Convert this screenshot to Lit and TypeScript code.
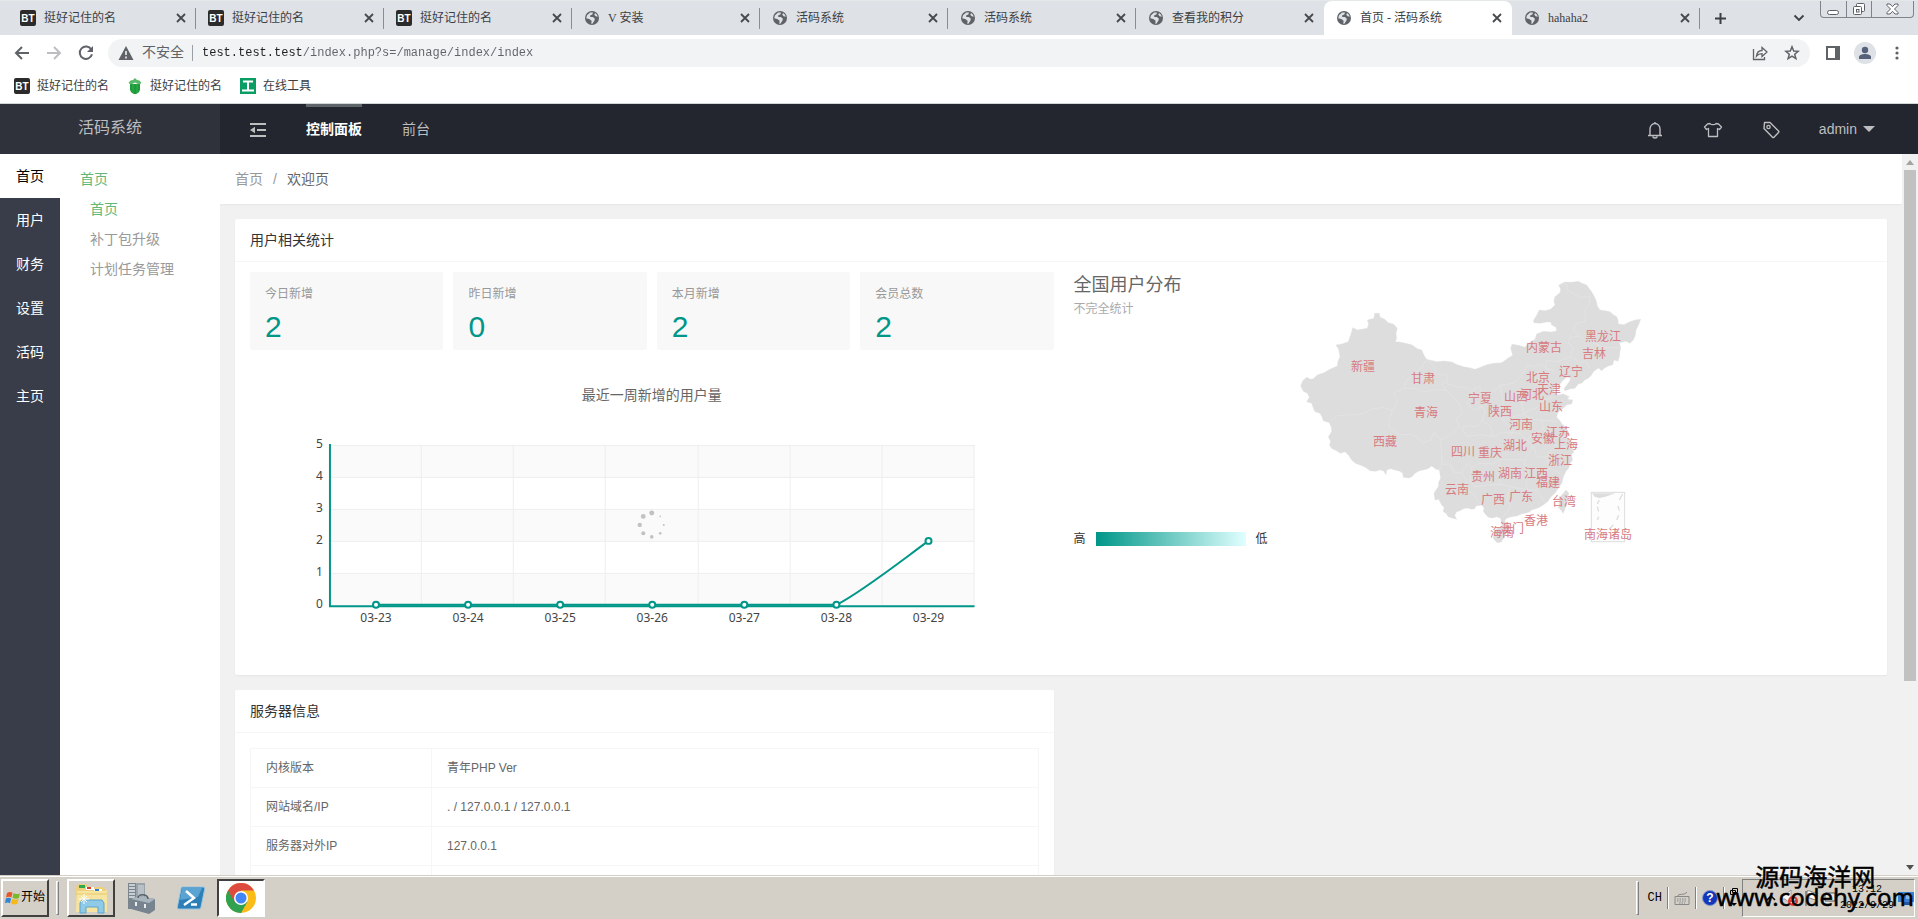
import { LitElement, html, svg, css } from "lit";
import { customElement } from "lit/decorators.js";
import { classMap } from "lit/directives/class-map.js";

type Fav = "bt" | "globe";

const TABS: { title: string; icon: Fav; active?: boolean }[] = [
  { title: "挺好记住的名", icon: "bt" },
  { title: "挺好记住的名", icon: "bt" },
  { title: "挺好记住的名", icon: "bt" },
  { title: "V 安装", icon: "globe" },
  { title: "活码系统", icon: "globe" },
  { title: "活码系统", icon: "globe" },
  { title: "查看我的积分", icon: "globe" },
  { title: "首页 - 活码系统", icon: "globe", active: true },
  { title: "hahaha2", icon: "globe" },
];

const PRIMARY = ["首页", "用户", "财务", "设置", "活码", "主页"];

const STATS = [
  { label: "今日新增", value: 2 },
  { label: "昨日新增", value: 0 },
  { label: "本月新增", value: 2 },
  { label: "会员总数", value: 2 },
];

const WEEK = [
  { day: "03-23", n: 0 },
  { day: "03-24", n: 0 },
  { day: "03-25", n: 0 },
  { day: "03-26", n: 0 },
  { day: "03-27", n: 0 },
  { day: "03-28", n: 0 },
  { day: "03-29", n: 2 },
];

const SERVER = [
  ["内核版本", "青年PHP Ver"],
  ["网站域名/IP", ". / 127.0.0.1 / 127.0.0.1"],
  ["服务器对外IP", "127.0.0.1"],
  ["", ""],
];

/* Province labels, centre points in map units (three units to a pixel). */
const PROVINCES: [string, number, number][] = [
  ["新疆", 250, 320], ["甘肃", 430, 356], ["青海", 439, 460], ["西藏", 314, 545],
  ["宁夏", 600, 418], ["陕西", 660, 457], ["山西", 708, 412], ["河北", 757, 404],
  ["北京", 775, 355], ["天津", 806, 389], ["内蒙古", 793, 263], ["黑龙江", 969, 230],
  ["吉林", 942, 281], ["辽宁", 872, 335], ["山东", 812, 440], ["河南", 724, 496],
  ["江苏", 834, 518], ["安徽", 788, 536], ["上海", 858, 554], ["湖北", 704, 557],
  ["浙江", 841, 602], ["四川", 549, 577], ["重庆", 629, 578], ["湖南", 691, 641],
  ["江西", 767, 641], ["福建", 804, 670], ["贵州", 610, 650], ["云南", 531, 689],
  ["广西", 638, 721], ["广东", 724, 711], ["台湾", 851, 725], ["香港", 767, 782],
  ["澳门", 697, 808], ["海南", 665, 820], ["南海诸岛", 983, 824],
];

const MAINLAND =
  "M62 378L68 362L80 352L92 358L100 356L112 345L132 338L150 328L172 318L174 304L180 290L176 268L168 255L186 252L205 245L208 236L212 225L218 203L232 210L245 208L262 205L266 192L262 180L282 175L284 160L298 160L300 172L314 178L325 188L340 192L352 205L348 220L350 235L346 246L358 246L376 250L395 254L412 266L425 270L432 286L440 298L470 305L492 303L515 306L532 314L550 320L568 323L585 328L602 322L620 314L642 310L665 308L682 296L698 286L692 265L696 253L716 256L735 262L745 250L765 238L770 222L790 214L812 216L830 213L828 202L815 195L812 186L800 186L782 190L762 188L760 182L770 166L778 150L795 152L812 148L825 135L822 124L824 112L832 104L840 98L842 88L836 76L846 70L855 66L876 67L895 64L906 70L920 75L928 86L935 95L942 108L948 120L952 138L960 150L976 152L990 155L1000 164L1010 170L1014 180L1015 192L1032 194L1050 185L1066 180L1082 178L1076 194L1068 210L1066 226L1060 240L1050 250L1038 244L1018 248L1022 262L1020 275L1018 290L1014 304L1002 300L998 314L985 318L974 324L965 332L955 324L940 335L934 346L925 355L914 360L905 370L895 372L885 385L872 386L855 392L852 386L858 378L868 365L872 354L860 352L848 362L840 372L828 378L820 385L822 398L835 405L850 402L868 410L862 418L878 420L875 432L860 434L850 445L840 450L832 462L830 472L838 480L846 492L855 500L868 520L862 530L846 528L862 536L875 545L872 556L882 575L874 584L878 600L870 610L866 625L858 634L850 650L846 668L835 685L826 698L812 712L804 724L790 735L774 744L755 750L748 756L735 760L724 762L710 768L694 770L680 775L674 782L680 795L668 800L664 790L662 775L650 770L638 774L625 772L618 764L610 755L612 744L605 735L588 738L584 746L575 748L562 744L550 746L540 752L530 755L524 766L530 778L516 774L505 770L498 760L490 755L492 742L485 735L476 718L465 720L462 700L468 690L475 680L476 666L482 655L478 630L468 628L455 618L444 626L430 630L418 632L405 640L396 650L386 654L370 652L368 640L360 634L345 630L332 626L320 630L318 644L310 632L300 630L286 634L270 632L256 622L240 615L226 610L215 600L206 586L195 575L182 580L165 570L156 566L148 555L152 544L145 530L155 515L154 502L148 488L130 482L126 470L120 460L105 455L100 444L95 430L80 425L88 412L82 400L70 394Z";

const BORDERS = [
  "M150 488L170 468L210 464L250 462L270 448L310 442L338 452",
  "M338 452L352 420L340 400L372 384L380 360L400 345L425 322L440 298",
  "M338 452L326 480L330 505L360 524L400 524L430 548L452 540L462 518L482 540L486 612L478 630",
  "M372 384L408 386L430 396L470 388L500 392L520 412L538 430L548 455L530 480L538 500L516 524L482 540",
  "M440 298L462 318L470 342L500 346L502 362L485 372L500 392",
  "M500 370L530 380L560 384L578 402L560 430L580 450L606 440L616 456L606 482L590 500L566 496L545 505",
  "M578 402L586 384L600 380L604 398L620 404L640 396L660 376L700 370L720 352L735 330L742 314L762 320L785 310L798 325L822 332",
  "M606 482L630 496L640 530L600 524L560 530L545 505",
  "M660 376L668 420L672 440L668 480L700 512L690 530",
  "M640 530L668 516L720 520L742 540L760 560L734 600L736 640L742 690",
  "M668 480L700 470L730 462L750 450L776 440L790 420L822 412",
  "M730 392L724 420L730 462L756 478L784 480L830 484",
  "M784 480L790 508L812 530L826 556L872 562",
  "M742 540L760 520L790 508M760 560L770 590L800 592L826 556",
  "M734 600L660 598L656 640L660 672L690 680L742 690L770 690L790 650L808 624L800 592",
  "M656 598L640 612L600 610L576 622L560 612L545 640L520 636L510 612L486 612",
  "M576 622L570 660L584 680L620 676L660 672M545 640L560 660L556 690L580 700L590 720L610 738",
  "M690 680L680 720L692 740L668 772M808 624L840 640L850 650M770 690L790 720L796 730",
  "M836 76L860 70L862 90L900 112L930 110L928 130L915 150L916 185L888 190L880 210L898 230",
  "M898 230L870 232L865 250L880 262L872 290L890 300L900 310L915 300L930 325",
  "M898 230L920 236L945 250L970 262L1000 262L1018 262",
  "M798 325L800 300L830 306L872 290M742 360L760 340L784 350L788 368L812 374",
];

const globe = svg`<circle cx="8" cy="8" r="7" fill="#5f6368"/><path d="M3 5.200 6.200 2.600 9 2.400 8.300 4.600 6.300 5.300 6.200 7 8.800 7 10.800 8.600 10.500 10.500 8.400 13.800 7.300 13.700 7.600 10.800 5.200 9 2.200 8.200zM11 3l2 1.800.7 2-2-.6-1.400-1.400z" fill="#dee1e6"/>`;
const bt = svg`<rect width="16" height="16" rx="2" fill="#2b2b2b"/><text x="8" y="12" text-anchor="middle" font-family="Liberation Sans, sans-serif" font-size="10" font-weight="700" fill="#fff">BT</text>`;
const ico = (w: number, h: number, body: unknown) =>
  html`<svg width=${w} height=${h} viewBox="0 0 ${w} ${h}" aria-hidden="true">${body}</svg>`;

@customElement("browser-chrome")
export class BrowserChrome extends LitElement {
  static styles = css`
    :host { display: block; font: 12px/16px "Liberation Serif", "Noto Sans CJK SC", serif; color: #3c4043; }
    svg { display: block; flex: none; }
    button { border: 0; padding: 0; background: none; font: inherit; color: inherit; display: flex; align-items: center; }
    .strip { display: flex; height: 35px; padding-left: 8px; background: #dee1e6; border-top: 1px solid #e4e8e8; box-sizing: border-box; align-items: stretch; }
    .tab { flex: 0 1 188px; display: flex; align-items: center; padding: 0 10px 0 12px; box-sizing: border-box; position: relative; }
    .tab:not(.on):not(.before)::after { content: ""; position: absolute; right: 0; top: 7px; bottom: 6px; width: 1px; background: #8a8d92; }
    .tab.on { background: #fff; border-radius: 8px 8px 0 0; }
    .name { flex: 1; gap: 8px; text-align: left; min-width: 0; white-space: nowrap; }
    .plus { margin: 0 auto 0 14px; }
    .chev { margin-right: 15px; }
    .wins { display: flex; height: 17px; margin-right: 4px; border: 1px solid #80848a; border-top: 0; border-radius: 0 0 4px 4px; box-sizing: border-box; }
    .wins button { width: 25px; justify-content: center; }
    .wins button + button { border-left: 1px solid #80848a; }
    .wins button:last-child { width: 42px; }
    .bar { display: flex; align-items: center; height: 36px; background: #fff; padding: 0 14px; gap: 16px; }
    .omni { flex: 1; display: flex; align-items: center; height: 28px; border-radius: 14px; background: #f1f3f4; margin-left: -2px; padding: 0 10px; font-size: 14px; color: #5f6368; }
    .omni span { margin-left: 8px; padding-right: 8px; border-right: 1px solid #9aa0a6; line-height: 16px; }
    .url { flex: 1; min-width: 0; border: 0; outline: 0; padding: 0; margin-left: 9px; font: 12px/16px "Liberation Mono", monospace; color: transparent;
      background: linear-gradient(90deg, #202124 14ch, #5f6368 14ch); -webkit-background-clip: text; background-clip: text; }
    .acts { display: flex; gap: 16px; }
    .tools { display: flex; align-items: center; gap: 14px; }
    .marks { display: flex; align-items: center; height: 32px; padding: 0 14px 2px; box-sizing: border-box; background: #fff; gap: 18px; }
    .edge { height: 1px; background: #cfd8d4; }
    .marks a { display: flex; gap: 7px; align-items: center; color: #3c4043; text-decoration: none; }
  `;
  render() {
    return html`
      <div class="strip" role="tablist">
        ${TABS.map((t, i) => html`
          <div class=${classMap({ tab: true, on: !!t.active, before: !!TABS[i + 1]?.active })}>
            <button class="name" role="tab" aria-selected=${t.active ? "true" : "false"}>${ico(16, 16, t.icon === "bt" ? bt : globe)}${t.title}</button>
            <button aria-label="关闭">${ico(10, 10, svg`<path d="M1 1l8 8M9 1L1 9" stroke="#45494d" stroke-width="1.800"/>`)}</button>
          </div>`)}
        <button class="plus" aria-label="新标签">${ico(13, 13, svg`<path d="M6.500 1v11M1 6.500h11" stroke="#3c4043" stroke-width="2"/>`)}</button>
        <button class="chev" aria-label="搜索标签">${ico(12, 8, svg`<path d="M1.500 1.500L6 6l4.500-4.500" stroke="#3c4043" stroke-width="1.800" fill="none"/>`)}</button>
        <div class="wins">
          <button aria-label="最小化">${ico(13, 15, svg`<rect x=".5" y="8.500" width="11" height="4" rx="2" fill="#fff" stroke="#5c6066"/>`)}</button>
          <button aria-label="还原">${ico(14, 14, svg`<rect x="4.500" y="1.500" width="8" height="8" rx="1" fill="#fff" stroke="#5c6066"/><rect x="1.500" y="4.500" width="8" height="8" rx="1" fill="#fff" stroke="#5c6066"/><rect x="4.500" y="7.500" width="2.500" height="2.500" fill="none" stroke="#5c6066"/>`)}</button>
          <button aria-label="关闭窗口">${ico(13, 12, svg`<path d="M1 1h3l2.500 2.700L9 1h3v1.500L8.500 6l3.500 3.500V11H9L6.500 8.300 4 11H1V9.500L4.500 6 1 2.500z" fill="#fff" stroke="#5c6066"/>`)}</button>
        </div>
      </div>
      <div class="bar">
        <button aria-label="后退">${ico(16, 16, svg`<path d="M15 8H2M8 2L2 8l6 6" stroke="#5f6368" stroke-width="2" fill="none"/>`)}</button>
        <button aria-label="前进">${ico(16, 16, svg`<path d="M1 8h13M8 2l6 6-6 6" stroke="#bcbec1" stroke-width="2" fill="none"/>`)}</button>
        <button aria-label="刷新">${ico(16, 16, svg`<path d="M13.300 4.500A6.200 6.200 0 1 0 14 9.300" stroke="#5f6368" stroke-width="2" fill="none"/><path d="M15 1v6H9z" fill="#5f6368"/>`)}</button>
        <div class="omni">
          ${ico(16, 14, svg`<path d="M8 0l7.500 14H.5z" fill="#5f6368"/><path d="M8 5v4M8 10.500v2" stroke="#f1f3f4" stroke-width="1.600"/>`)}
          <span>不安全</span>
          <input class="url" aria-label="地址" value="test.test.test/index.php?s=/manage/index/index" />
          <div class="acts">
            <button aria-label="分享">${ico(16, 16, svg`<path d="M1.500 4v10.500h11V12" stroke="#5f6368" stroke-width="1.300" fill="none"/><path d="M4.500 11C5 7 7.500 5.500 10 5.500V2.500l5 4.500-5 4.500V8.600C8 8.600 6 9 4.500 11z" stroke="#5f6368" stroke-width="1.300" fill="none"/>`)}</button>
            <button aria-label="收藏">${ico(16, 16, svg`<path d="M8 1.800l1.700 4.200 4.500.3-3.500 2.900 1.200 4.400L8 11.200l-3.900 2.400 1.200-4.400L1.800 6.300 6.300 6z" stroke="#5f6368" stroke-width="1.500" fill="none"/>`)}</button>
          </div>
        </div>
        <div class="tools">
          <button aria-label="侧边栏">${ico(14, 14, svg`<path d="M1 1h12v12H1z" stroke="#5f6368" stroke-width="2" fill="none"/><path d="M9 1h4v12H9z" fill="#5f6368"/>`)}</button>
          <button aria-label="用户">${ico(22, 22, svg`<circle cx="11" cy="11" r="11" fill="#dee1e6"/><circle cx="11" cy="8" r="3.200" fill="#56627a"/><path d="M5 17v-2c0-4 12-4 12 0v2z" fill="#56627a"/>`)}</button>
          <button aria-label="菜单">${ico(14, 14, svg`<circle cx="7" cy="2" r="1.600" fill="#5f6368"/><circle cx="7" cy="7" r="1.600" fill="#5f6368"/><circle cx="7" cy="12" r="1.600" fill="#5f6368"/>`)}</button>
        </div>
      </div>
      <nav class="marks">
        <a href="#">${ico(16, 16, bt)}挺好记住的名</a>
        <a href="#">${ico(16, 16, svg`<path d="M3 6h10v5c0 3-3 5-5 5s-5-2-5-5z" fill="#1f9a3a"/><path d="M1.500 5l2-2.500L6 2l2-2 2 2 2.500.5 2 2.500-2.500 1.500L8 4.500 4 6.500z" fill="#58b96b"/><path d="M6 6v9M10 6v9" stroke="#2fb04c"/>`)}挺好记住的名</a>
        <a href="#">${ico(16, 16, svg`<rect width="16" height="16" fill="#0a9d63"/><path d="M3 3.500h10M8 3.500v9M2 12.500h12" stroke="#fff" stroke-width="2"/>`)}在线工具</a>
      </nav>
      <div class="edge"></div>`;
  }
}

@customElement("week-chart")
export class WeekChart extends LitElement {
  static styles = css`
    :host { display: block; }
    svg { display: block; width: 100%; height: auto; }
    .title { font: 14px "Liberation Sans", "Noto Sans CJK SC", sans-serif; fill: #666; }
    .tick { font: 12px "Noto Sans", sans-serif; fill: #444; }
    .spin { fill: #c2c2c2; }
  `;
  render() {
    const L = 80, T = 95, W = 645, H = 160, base = T + H;
    const step = W / WEEK.length;
    const px = (i: number) => L + step * (i + 0.5);
    const py = (n: number) => base - (n * H) / 5;
    const dots = [2.5, 0.8, 1, 1.3, 1.8, 2, 2.2, 2.4];
    return html`<svg viewBox="0 0 804 315" role="img" aria-label="最近一周新增的用户量">
      <text class="title" x="402" y="50" text-anchor="middle">最近一周新增的用户量</text>
      ${[0, 2, 4].map((r) => svg`<rect x=${L} y=${T + r * 32} width=${W} height="32" fill="#fafafa"/>`)}
      ${[0, 1, 2, 3, 4].map((r) => svg`<path d="M${L} ${T + r * 32 + 0.5}h${W}" stroke="#eee"/>`)}
      ${WEEK.map((_, i) => svg`<path d="M${Math.round(L + step * (i + 1)) - 0.5} ${T}v${H}" stroke="#eee"/>`)}
      ${[0, 1, 2, 3, 4, 5].map((n) => svg`<text class="tick" x="73" y=${py(n) + 3} text-anchor="end">${n}</text>`)}
      ${WEEK.map((d, i) => svg`<text class="tick" x=${px(i)} y="272" text-anchor="middle">${d.day}</text>`)}
      ${dots.map((r, i) => svg`<circle class="spin" cx=${402 + 12 * Math.sin((i * Math.PI) / 4)} cy=${175 - 12 * Math.cos((i * Math.PI) / 4)} r=${r}/>`)}
      <path d="M80 94v163M79 256.500h646" stroke="#009688" stroke-width="2"/>
      <path d="M${px(0)} ${base}H${px(5)}C${px(5) + 24} ${base - 12} ${px(6) - 30} ${py(2) + 22} ${px(6)} ${py(2)}" fill="none" stroke="#009688" stroke-width="2"/>
      ${WEEK.map((d, i) => svg`<circle cx=${px(i)} cy=${py(d.n)} r="3" fill="#fff" stroke="#009688" stroke-width="2"/>`)}
    </svg>`;
  }
}

@customElement("user-map")
export class UserMap extends LitElement {
  static styles = css`
    :host { display: flex; font: 12px/16px "Liberation Sans", "Noto Sans CJK SC", sans-serif; }
    .side { flex: 0 0 206px; display: flex; flex-direction: column; padding-bottom: 3px; box-sizing: border-box; }
    h3 { margin: 0 0 3px; font-size: 18px; font-weight: 400; line-height: 26px; color: #666; }
    p { margin: 0; color: #aaa; }
    .scale { display: flex; align-items: center; gap: 10px; margin-top: auto; color: #333; }
    .ramp { width: 150px; height: 14px; background: linear-gradient(90deg, #009688, #e0ffff); }
    svg { display: block; flex: none; }
    .land { fill: #ddd; stroke: #ddd; }
    .line { fill: none; stroke: #e6e6e6; stroke-width: 2; }
    .name { font: 12px "Liberation Sans", "Noto Sans CJK SC", sans-serif; fill: #d87a80; text-anchor: middle; }
  `;
  render() {
    return html`
      <div class="side">
        <h3>全国用户分布</h3>
        <p>不完全统计</p>
        <div class="scale"><span>高</span><div class="ramp"></div><span>低</span></div>
      </div>
      <svg width="380" height="278" viewBox="0 12 380 278" role="img" aria-label="全国用户分布">
        <g transform="scale(.33333)">
          <path class="land" d=${MAINLAND}/>
          <path class="land" d="M642 812L655 804L672 800L682 808L676 826L664 846L652 848L640 836Z"/>
          <path class="land" d="M858 690L866 698L862 728L850 760L836 742L840 712Z"/>
          ${BORDERS.map((d) => svg`<path class="line" d=${d}/>`)}
          <rect x="934" y="697" width="100" height="148" fill="#fdfdfd" stroke="#ddd" stroke-width="3"/>
          <path d="M936 700h70l-30 10-18 4-14-4z" fill="#ddd"/>
          <path d="M1028 702l-10 18M958 720l-6 12M952 740l4 14M956 770l-4 10M1014 738l4 14M1016 766l-6 14M1000 794l-10 12" stroke="#ddd" stroke-width="4"/>
        </g>
        ${PROVINCES.map(([n, x, y]) => svg`<text class="name" x=${Math.round(x / 3)} y=${Math.round(y / 3) + 4}>${n}</text>`)}
      </svg>`;
  }
}

@customElement("admin-page")
export class AdminPage extends LitElement {
  static styles = css`
    :host { display: flex; flex-direction: column; min-height: 0; overflow: hidden; font: 14px/20px "Liberation Sans", "Noto Sans CJK SC", sans-serif; color: #666; }
    a { color: inherit; text-decoration: none; }
    svg { display: block; flex: none; }
    .top { flex: none; display: flex; height: 50px; background: #23262e; color: #bdbec0; }
    .logo { width: 220px; background: #2f323b; display: flex; align-items: center; justify-content: center; font-size: 16px; padding-bottom: 2px; box-sizing: border-box; }
    .menu { flex: 1; display: flex; align-items: stretch; padding: 0 43px 0 30px; }
    .menu a, .user { display: flex; align-items: center; padding-bottom: 1px; box-sizing: border-box; }
    .fold { border: 0; background: none; padding: 2px 0 0; margin-right: 40px; }
    .menu .on { color: #fff; font-weight: 700; border-top: 3px solid #5f6669; padding-bottom: 4px; margin-right: 40px; }
    .icons { display: flex; gap: 38px; align-items: center; margin: 2px 38px 0 auto; }
    .icons button, .user { border: 0; background: none; padding-left: 0; padding-right: 0; color: inherit; font: inherit; }
    .user { gap: 6px; padding-top: 0; }
    .main { flex: 1; min-height: 0; display: flex; }
    .first { flex: 0 0 60px; background: #393d49; color: #fff; }
    .first a { display: block; line-height: 44px; text-align: center; }
    .first .on { background: #fff; color: #000; }
    .second { flex: 0 0 160px; background: #fff; color: #999; padding: 10px 20px; box-sizing: border-box; }
    .second a { display: block; line-height: 30px; }
    .second .sub { padding-left: 10px; }
    .second .on { color: #5fb878; }
    .view { flex: 1; min-width: 0; overflow: hidden; background: #f1f1f1; }
    .crumb { height: 50px; background: #fff; box-shadow: 0 1px 2px rgba(0, 0, 0, 0.05); padding-left: 15px; display: flex; align-items: center; gap: 10px; color: #999; }
    .crumb b { font-weight: 400; color: #666; }
    .body { padding: 15px; display: grid; grid-template-columns: 1fr 1fr; gap: 15px; }
    .card { background: #fff; border-radius: 2px; box-shadow: 0 1px 2px rgba(0, 0, 0, 0.05); }
    .card.wide { grid-column: 1 / -1; }
    .card h2 { margin: 0; font-size: 14px; font-weight: 400; line-height: 42px; padding: 0 15px; color: #333; border-bottom: 1px solid #f6f6f6; }
    .cols { display: grid; grid-template-columns: 1fr 1fr; gap: 15px; padding: 10px 15px; align-items: start; }
    .stats { display: grid; grid-template-columns: repeat(4, 1fr); gap: 10px; }
    .stat { background: #f8f8f8; border-radius: 2px; padding: 12px 15px 0; color: #999; font-size: 12px; line-height: 20px; }
    .stat strong { display: block; font-size: 30px; font-weight: 400; line-height: 46px; color: #009688; }
    user-map { padding-left: 5px; }
    .info { padding: 15px; }
    table { width: 100%; border-collapse: collapse; font-size: 12px; table-layout: fixed; }
    th, td { border: 1px solid #f6f6f6; font-weight: 400; text-align: left; padding: 9px 15px; height: 20px; }
    th { width: 150px; }
    .rail { flex: 0 0 16px; background: #f1f1f1; display: flex; flex-direction: column; align-items: center; padding: 6px 0 5px; box-sizing: border-box; }
    .thumb { width: 12px; height: 72%; margin: 5px 0 auto; background: #c1c1c1; }
  `;
  render() {
    return html`
      <header class="top">
        <a class="logo" href="#">活码系统</a>
        <div class="menu">
          <button class="fold" aria-label="收起">${ico(16, 16, svg`<path d="M0 2h16M7 8h9M0 14h16" stroke="#bdbec0" stroke-width="2"/><path d="M0 8l5-3.200v6.400z" fill="#bdbec0"/>`)}</button>
          <a class="on" href="#">控制面板</a>
          <a href="#">前台</a>
          <div class="icons">
            <button aria-label="消息">${ico(20, 20, svg`<path d="M3 15.500h14M5 15.500V9a5 5.500 0 0 1 10 0v6.500M8 16.500a2 1.500 0 0 0 4 0M10 3.500V2" stroke="#bdbec0" stroke-width="1.400" fill="none"/>`)}</button>
            <button aria-label="主题">${ico(20, 20, svg`<path d="M7 3.500c1 1.600 5 1.600 6 0l2.500.5L18.500 7l-2 2.500-2-1v8h-9v-8l-2 1-2-2.500L4.500 4z" stroke="#bdbec0" stroke-width="1.300" fill="none" stroke-linejoin="round"/>`)}</button>
            <button aria-label="便签">${ico(20, 20, svg`<path d="M3.500 2.500L9 2.500 17.500 11c.5.500.5 1 0 1.500L13 17.200c-.5.500-1 .5-1.500 0L3 8.500z" stroke="#bdbec0" stroke-width="1.400" fill="none" stroke-linejoin="round"/><circle cx="7.500" cy="7" r="1.700" stroke="#bdbec0" stroke-width="1.300" fill="none"/>`)}</button>
          </div>
          <button class="user">admin ${ico(12, 6, svg`<path d="M0 0h12L6 6z" fill="#bdbec0"/>`)}</button>
        </div>
      </header>
      <div class="main">
        <nav class="first">${PRIMARY.map((n, i) => html`<a href="#" class=${classMap({ on: i === 0 })}>${n}</a>`)}</nav>
        <nav class="second">
          <a class="on" href="#">首页</a>
          <a class="sub on" href="#">首页</a>
          <a class="sub" href="#">补丁包升级</a>
          <a class="sub" href="#">计划任务管理</a>
        </nav>
        <div class="view">
          <div class="crumb"><a href="#">首页</a><span>/</span><b>欢迎页</b></div>
          <div class="body">
            <section class="card wide">
              <h2>用户相关统计</h2>
              <div class="cols">
                <div>
                  <div class="stats">${STATS.map((s) => html`<div class="stat">${s.label}<strong>${s.value}</strong></div>`)}</div>
                  <week-chart></week-chart>
                </div>
                <user-map></user-map>
              </div>
            </section>
            <section class="card">
              <h2>服务器信息</h2>
              <div class="info">
                <table><tbody>${SERVER.map(([k, v]) => html`<tr><th scope="row">${k}</th><td>${v}</td></tr>`)}</tbody></table>
              </div>
            </section>
          </div>
        </div>
        <div class="rail">
          ${ico(8, 5, svg`<path d="M0 5l4-5 4 5z" fill="#a3a3a3"/>`)}
          <div class="thumb"></div>
          ${ico(8, 5, svg`<path d="M0 0l4 5 4-5z" fill="#505050"/>`)}
        </div>
      </div>`;
  }
}

@customElement("task-bar")
export class TaskBar extends LitElement {
  static styles = css`
    :host { display: flex; align-items: center; height: 44px; box-sizing: border-box; background: #d4d0c8; border-top: 1px solid #d4d0c8; box-shadow: inset 0 1px #fff; padding: 1px 3px 1px 1px; position: relative; font: 12px/16px "Liberation Mono", "Noto Sans CJK SC", monospace; color: #000; }
    svg { display: block; flex: none; }
    button { border: 0; background: none; padding: 0; font: inherit; color: inherit; display: flex; align-items: center; justify-content: center; height: 38px; width: 48px; }
    .raised { border: 2px solid; border-color: #fff #404040 #404040 #fff; box-sizing: border-box; }
    .sunk { border: 2px solid; border-color: #404040 #fff #fff #404040; background: #fff; box-sizing: border-box; }
    .grip { width: 3px; height: 34px; border: 1px solid; border-color: #fff #808080 #808080 #fff; box-sizing: border-box; }
    .apps { display: flex; gap: 2px; margin: 0 auto 0 8px; }
    .start { margin-right: 7px; }
    .lang { display: flex; align-items: center; gap: 5px; padding: 0 4px 0 9px; }
    .sep { width: 1px; height: 22px; background: #808080; border-right: 1px solid #fff; }
    .tray { display: flex; align-items: center; justify-content: flex-end; gap: 4px; width: 173px; height: 38px; border: 1px solid; border-color: #808080 #fff #fff #808080; box-sizing: border-box; }
    .clock { text-align: center; font-size: 10px; }
    .mark { position: absolute; right: 4px; bottom: 12px; text-align: center; font: 24px/20px "Noto Sans", "Noto Sans CJK SC", sans-serif; -webkit-text-stroke: 0.5px #000; pointer-events: none; }
  `;
  render() {
    return html`
      <button class="raised start">${ico(16, 16, svg`<path d="M2 3c2-1.500 4-1.200 5.500-.2L6.300 7.500C4.800 6.500 3 6.500 1 7.500z" fill="#e8562a"/><path d="M8.500 3.200c2 1 4 1.200 6.500 0L13.800 8c-2 1-4 .8-6.300-.3z" fill="#7ab929"/><path d="M.8 8.500c2-1 3.500-1 5.300 0L5 13.300C3.500 12.300 2 12.200 0 13.300z" fill="#2f86d8"/><path d="M7.200 8.800c2 1 4 1.200 6.400.2L12.300 13.800c-2 .9-4 .8-6.300-.3z" fill="#f6b91b"/>`)}开始</button>
      <div class="grip"></div>
      <div class="apps">
        <button class="raised" aria-label="资源管理器">${ico(32, 32, svg`<path d="M1 8V5l3-3h7l3 3h14l2 2v23H2z" fill="#edd07a"/><path d="M4 3h6v3H4z" fill="#2fa84f"/><path d="M11 5h8v3h-8z" fill="#fff"/><path d="M12 5h4v2h-4z" fill="#d9402c"/><path d="M19 7h8v3h-8z" fill="#fff"/><path d="M20 7h4v2h-4z" fill="#2c7cd0"/><path d="M2 9h28l2-1v22H1z" fill="#f7e4a0"/><path d="M1 12h31" stroke="#e6c96c"/><path d="M5 31V21l2-3h20l2 3v10h-6v-6H11v6z" fill="#8fcbe8" stroke="#5ba4cc"/><path d="M9 12v10M4 17h10M6 14l6 6M12 14l-6 6" stroke="#fff"/>`)}</button>
        <button aria-label="服务器管理器">${ico(30, 32, svg`<path d="M2 1h17v26H2z" fill="#9aa3aa"/><path d="M2 1h8v26H2z" fill="#7b858d"/><path d="M3 3h6M3 6h6M3 9h6M3 12h6M3 15h6" stroke="#e2e6e8" stroke-width="1.500"/><path d="M12 3h6v20h-6z" fill="#b9c0c5"/><path d="M5 17l8-3 16 3v11l-6 4-18-5z" fill="#77848f"/><path d="M5 17l8-3 16 3-6 4z" fill="#a9b4bc"/><path d="M12 16c0-5 10-4 10 1" stroke="#56626c" stroke-width="1.500" fill="none"/><path d="M10 20v4M19 22v4" stroke="#e8ecee" stroke-width="2"/>`)}</button>
        <button aria-label="PowerShell">${ico(28, 24, svg`<path d="M5 1h21c1.500 0 2 1 1.700 2L24 21c-.3 1.300-1 2-2 2H2c-1.500 0-2-1-1.700-2L4 3c.1-1 .5-2 1-2z" fill="#2d7fb8" stroke="#9cc7e2"/><path d="M5 2h20l-4 9L3 14z" fill="#5aa3d3"/><path d="M9 5l8 7-10 7" stroke="#fff" stroke-width="2.500" fill="none"/><path d="M14 18.500h6" stroke="#fff" stroke-width="2.500"/>`)}</button>
        <button class="sunk" aria-label="Chrome">${ico(30, 30, svg`<circle cx="15" cy="15" r="15" fill="#fbbc18"/><path d="M15 15L2 7.500A15 15 0 0 0 15 30l6.500-11.250z" fill="#2fa14f"/><path d="M2 7.500A15 15 0 0 1 28 7.500H15L8.500 18.750z" fill="#dd4b3e"/><circle cx="15" cy="15" r="7" fill="#fff"/><circle cx="15" cy="15" r="5.500" fill="#4285f4"/>`)}</button>
      </div>
      <div class="grip"></div>
      <div class="lang">
        <span>CH</span><div class="sep"></div>
        ${ico(16, 16, svg`<path d="M1 6.500h14v8H1zM4 6c0-3 6 0 9-4" stroke="#888" fill="none"/><path d="M3 9h10M3 11h10M5 13h6" stroke="#888" stroke-dasharray="1.500 1"/>`)}
        <div class="sep"></div>
        ${ico(16, 16, svg`<circle cx="8" cy="8" r="7.500" fill="#1436b8" stroke="#8595cf"/><text x="8" y="12" text-anchor="middle" font-family="Liberation Sans, sans-serif" font-weight="700" font-size="12" fill="#fff">?</text>`)}
        <div class="sep"></div>
        ${ico(8, 20, svg`<path d="M2.500.5h5v4h-5zM.5 2.500h5v4h-5z" fill="#d4d0c8" stroke="#000"/><path d="M1 15h6l-3 3z"/>`)}
      </div>
      <div class="tray">
        ${ico(10, 6, svg`<path d="M1 5l4-4 4 4" stroke="#000" stroke-width="1.500" fill="none"/>`)}
        ${ico(20, 18, svg`<path d="M1 6h4l6-5v14l-6-5H1z" fill="#fff" stroke="#999"/><circle cx="13" cy="12" r="5" fill="#df3a2f"/><path d="M11 10l4 4M15 10l-4 4" stroke="#fff" stroke-width="1.500"/>`)}
        ${ico(14, 16, svg`<path d="M2 1v15" stroke="#777" stroke-width="1.500"/><path d="M3 1c4-1 6 3 10 1v7c-4 2-6-2-10-1z" fill="#fff" stroke="#777"/>`)}
        ${ico(14, 14, svg`<path d="M3 2h10v8H3zM1 5v8h9" fill="#e8e8e8" stroke="#555"/>`)}
        <div class="clock">13:12<br />2022/9/29</div>
        ${ico(16, 16, svg`<path d="M0 2h16v10H0z" fill="#3d7fd0"/><path d="M5 12h7v3H5z" fill="#2456a0"/><path d="M8 4h6v5H8z" fill="#86b4ea"/>`)}
      </div>
      <div class="mark">源码海洋网<br />www.codehy.com</div>`;
  }
}

@customElement("app-root")
export class AppRoot extends LitElement {
  static styles = css`
    :host { display: flex; flex-direction: column; height: 100vh; overflow: hidden; }
    browser-chrome, task-bar { flex: none; }
    admin-page { flex: 1; }
  `;
  render() {
    return html`<browser-chrome></browser-chrome><admin-page></admin-page><task-bar></task-bar>`;
  }
}
